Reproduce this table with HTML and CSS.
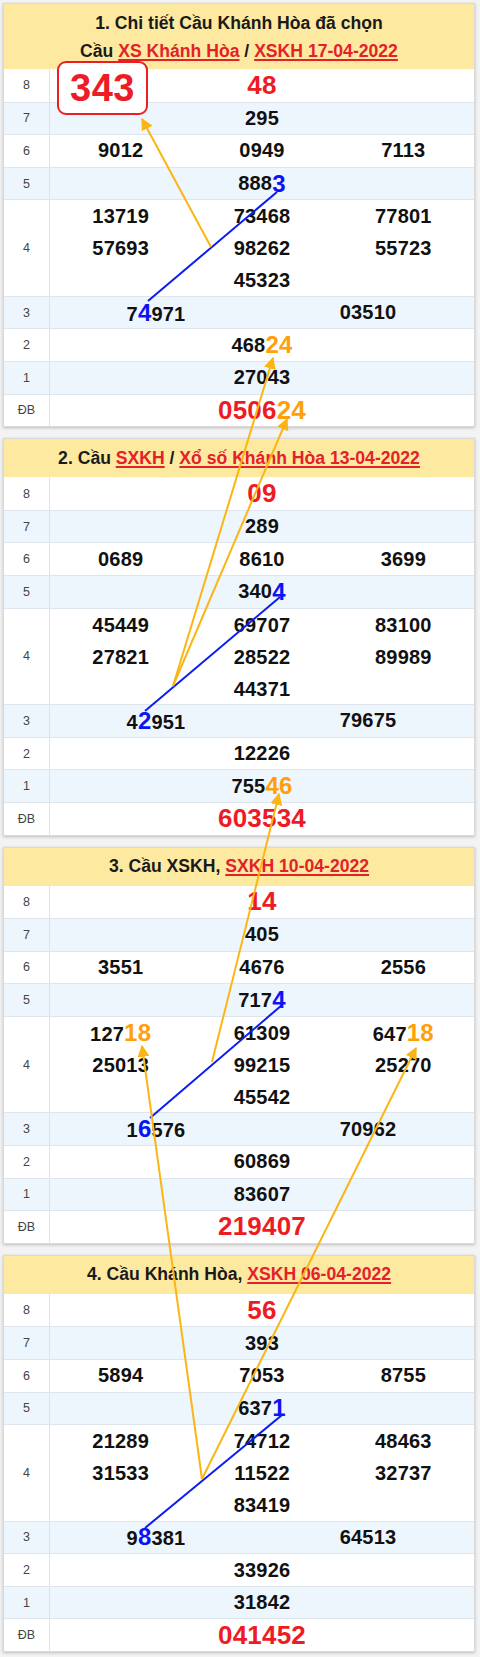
FILE: index.html
```html
<!DOCTYPE html>
<html lang="vi">
<head>
<meta charset="utf-8">
<title>Cầu Khánh Hòa</title>
<link rel="stylesheet" href="styles.css">
</head>
<body>
<div class="page">

  <section class="card">
    <div class="head two">
      <div>1. Chi tiết Cầu Khánh Hòa đã chọn</div>
      <div>Cầu <a href="#">XS Khánh Hòa</a> / <a href="#">XSKH 17-04-2022</a></div>
    </div>
    <div class="row"><div class="lbl">8</div><div class="vals"><span class="big red">48</span></div></div>
    <div class="row alt"><div class="lbl">7</div><div class="vals">295</div></div>
    <div class="row"><div class="lbl">6</div><div class="vals g3"><div>9012</div><div>0949</div><div>7113</div></div></div>
    <div class="row alt"><div class="lbl">5</div><div class="vals">888<b class="hl blue">3</b></div></div>
    <div class="row tall"><div class="lbl">4</div><div class="vals g3 stack"><div><p>13719</p><p>57693</p></div><div><p>73468</p><p>98262</p><p>45323</p></div><div><p>77801</p><p>55723</p></div></div></div>
    <div class="row alt"><div class="lbl">3</div><div class="vals g2"><div>7<b class="hl blue">4</b>971</div><div>03510</div></div></div>
    <div class="row"><div class="lbl">2</div><div class="vals">468<b class="hl orange">24</b></div></div>
    <div class="row alt"><div class="lbl">1</div><div class="vals">27043</div></div>
    <div class="row"><div class="lbl">ĐB</div><div class="vals"><span class="big red">0506<b class="orange">24</b></span></div></div>
  </section>

  <section class="card">
    <div class="head">
      <div>2. Cầu <a href="#">SXKH</a> / <a href="#">Xổ số Khánh Hòa 13-04-2022</a></div>
    </div>
    <div class="row"><div class="lbl">8</div><div class="vals"><span class="big red">09</span></div></div>
    <div class="row alt"><div class="lbl">7</div><div class="vals">289</div></div>
    <div class="row"><div class="lbl">6</div><div class="vals g3"><div>0689</div><div>8610</div><div>3699</div></div></div>
    <div class="row alt"><div class="lbl">5</div><div class="vals">340<b class="hl blue">4</b></div></div>
    <div class="row tall"><div class="lbl">4</div><div class="vals g3 stack"><div><p>45449</p><p>27821</p></div><div><p>69707</p><p>28522</p><p>44371</p></div><div><p>83100</p><p>89989</p></div></div></div>
    <div class="row alt"><div class="lbl">3</div><div class="vals g2"><div>4<b class="hl blue">2</b>951</div><div>79675</div></div></div>
    <div class="row"><div class="lbl">2</div><div class="vals">12226</div></div>
    <div class="row alt"><div class="lbl">1</div><div class="vals">755<b class="hl orange">46</b></div></div>
    <div class="row"><div class="lbl">ĐB</div><div class="vals"><span class="big red">603534</span></div></div>
  </section>

  <section class="card">
    <div class="head">
      <div>3. Cầu XSKH, <a href="#">SXKH 10-04-2022</a></div>
    </div>
    <div class="row"><div class="lbl">8</div><div class="vals"><span class="big red">14</span></div></div>
    <div class="row alt"><div class="lbl">7</div><div class="vals">405</div></div>
    <div class="row"><div class="lbl">6</div><div class="vals g3"><div>3551</div><div>4676</div><div>2556</div></div></div>
    <div class="row alt"><div class="lbl">5</div><div class="vals">717<b class="hl blue">4</b></div></div>
    <div class="row tall"><div class="lbl">4</div><div class="vals g3 stack"><div><p>127<b class="hl orange">18</b></p><p>25013</p></div><div><p>61309</p><p>99215</p><p>45542</p></div><div><p>647<b class="hl orange">18</b></p><p>25270</p></div></div></div>
    <div class="row alt"><div class="lbl">3</div><div class="vals g2"><div>1<b class="hl blue">6</b>576</div><div>70962</div></div></div>
    <div class="row"><div class="lbl">2</div><div class="vals">60869</div></div>
    <div class="row alt"><div class="lbl">1</div><div class="vals">83607</div></div>
    <div class="row"><div class="lbl">ĐB</div><div class="vals"><span class="big red">219407</span></div></div>
  </section>

  <section class="card">
    <div class="head">
      <div>4. Cầu Khánh Hòa, <a href="#">XSKH 06-04-2022</a></div>
    </div>
    <div class="row"><div class="lbl">8</div><div class="vals"><span class="big red">56</span></div></div>
    <div class="row alt"><div class="lbl">7</div><div class="vals">393</div></div>
    <div class="row"><div class="lbl">6</div><div class="vals g3"><div>5894</div><div>7053</div><div>8755</div></div></div>
    <div class="row alt"><div class="lbl">5</div><div class="vals">637<b class="hl blue">1</b></div></div>
    <div class="row tall"><div class="lbl">4</div><div class="vals g3 stack"><div><p>21289</p><p>31533</p></div><div><p>74712</p><p>11522</p><p>83419</p></div><div><p>48463</p><p>32737</p></div></div></div>
    <div class="row alt"><div class="lbl">3</div><div class="vals g2"><div>9<b class="hl blue">8</b>381</div><div>64513</div></div></div>
    <div class="row"><div class="lbl">2</div><div class="vals">33926</div></div>
    <div class="row alt"><div class="lbl">1</div><div class="vals">31842</div></div>
    <div class="row"><div class="lbl">ĐB</div><div class="vals"><span class="big red">041452</span></div></div>
  </section>

  <div class="pick">343</div>

  <svg class="overlay" width="480" height="1657" viewBox="0 0 480 1657" aria-hidden="true">
    <defs>
      <marker id="ah" viewBox="0 0 10 10" refX="9" refY="5" markerWidth="12" markerHeight="12" markerUnits="userSpaceOnUse" orient="auto">
        <path d="M0,0 L10,5 L0,10 z" fill="#fbb514"/>
      </marker>
    </defs>
    <g class="blue-l">
      <line x1="148" y1="301" x2="277" y2="192"/>
      <line x1="145" y1="711" x2="280" y2="597"/>
      <line x1="150" y1="1118" x2="282" y2="1005"/>
      <line x1="145" y1="1528" x2="282" y2="1415"/>
    </g>
    <g class="orange-l">
      <line x1="211" y1="247" x2="142" y2="119" marker-end="url(#ah)"/>
      <line x1="173" y1="686" x2="273" y2="358" marker-end="url(#ah)"/>
      <line x1="173" y1="686" x2="287" y2="419" marker-end="url(#ah)"/>
      <line x1="212" y1="1062" x2="279" y2="794" marker-end="url(#ah)"/>
      <line x1="202" y1="1479" x2="142" y2="1046" marker-end="url(#ah)"/>
      <line x1="202" y1="1479" x2="416" y2="1048" marker-end="url(#ah)"/>
    </g>
  </svg>
</div>
</body>
</html>
```

FILE: styles.css
```css
* { box-sizing: border-box; }

html, body {
  margin: 0;
  padding: 0;
  background: #f3f3f3;
}

body {
  font-family: "Liberation Sans", Arial, sans-serif;
  color: #111;
}

.page {
  position: relative;
  width: 480px;
  height: 1657px;
  padding: 3px 5px 0 3px;
  overflow: hidden;
}

.card {
  background: #fff;
  border: 1px solid #d9d9d9;
  box-shadow: 0 1px 3px rgba(0, 0, 0, 0.22);
  margin-bottom: 11px;
}

.head {
  background: #fde99f;
  text-align: center;
  font-weight: bold;
  font-size: 17.6px;
  line-height: 29px;
  padding: 4.5px 0;
  color: #1a1a1a;
}

.head.two { line-height: 28px; }

.head a {
  color: #e3212b;
  text-decoration: underline;
  text-decoration-thickness: 1.5px;
  text-underline-offset: 2px;
}

.row {
  display: flex;
  height: 32.6px;
  border-top: 1px solid #dfe5ec;
}

.head + .row { border-top: none; }

.row.alt { background: #eef6fd; }

.row.tall { height: 96.5px; }

.lbl {
  width: 46px;
  flex: none;
  border-right: 1px solid #e0e3e6;
  display: flex;
  align-items: center;
  justify-content: center;
  font-size: 12.5px;
  color: #444;
}

.vals {
  flex: 1;
  display: flex;
  align-items: center;
  justify-content: center;
  font-size: 20px;
  font-weight: bold;
  letter-spacing: 0.2px;
}

.vals.g3,
.vals.g2 {
  display: grid;
  align-items: center;
  justify-items: center;
}

.vals.g3 { grid-template-columns: repeat(3, 1fr); }
.vals.g2 { grid-template-columns: repeat(2, 1fr); }

.vals.stack { align-items: start; }

.stack p {
  margin: 0;
  height: 32px;
  line-height: 32px;
  text-align: center;
}

.hl { font-size: 24px; }

.big { font-size: 26px; }

.red { color: #ed1c24; }
.blue { color: #0a14f5; }
.orange { color: #ff9f0a; }

.pick {
  position: absolute;
  left: 57px;
  top: 61px;
  width: 91px;
  height: 54px;
  border: 2px solid #ee1c25;
  border-radius: 9px;
  background: #fff;
  color: #ee1c25;
  font-size: 38px;
  font-weight: bold;
  display: flex;
  align-items: center;
  justify-content: center;
  letter-spacing: 0.5px;
}

.overlay {
  position: absolute;
  left: 0;
  top: 0;
  pointer-events: none;
}

.blue-l line {
  stroke: #0a1cf0;
  stroke-width: 2;
}

.orange-l line {
  stroke: #fbb514;
  stroke-width: 2;
}
```
